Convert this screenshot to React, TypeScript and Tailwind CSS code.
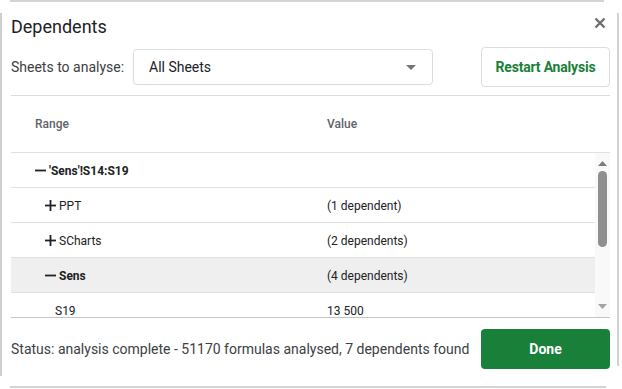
import React from "react";

type Row = {
  label: string;
  value?: string;
  sign?: "minus" | "plus";
  indent: number;
  bold?: boolean;
  active?: boolean;
};

const rows: Row[] = [
  { label: "'Sens'!S14:S19", sign: "minus", indent: 24, bold: true },
  { label: "PPT", value: "(1 dependent)", sign: "plus", indent: 34 },
  { label: "SCharts", value: "(2 dependents)", sign: "plus", indent: 34 },
  { label: "Sens", value: "(4 dependents)", sign: "minus", indent: 34, bold: true, active: true },
  { label: "S19", value: "13 500", indent: 44 },
];

function Sign({ kind }: { kind: "minus" | "plus" }) {
  return (
    <svg width="11" height="11" viewBox="0 0 11 11" className="shrink-0 mr-[2px]">
      <rect x="0" y="4.6" width="11" height="1.8" fill="#202124" />
      {kind === "plus" && <rect x="4.6" y="0" width="1.8" height="11" fill="#202124" />}
    </svg>
  );
}

function TableRow({ row }: { row: Row }) {
  return (
    <div
      className={`flex items-center h-[35px] pt-[1px] shrink-0 border-b border-[#e0e0e0] text-[12px] text-[#202124] ${
        row.active ? "bg-[#efefef]" : ""
      }`}
    >
      <div
        className={`w-[316px] flex items-center gap-[1px] ${row.bold ? "font-bold" : ""}`}
        style={{ paddingLeft: row.indent }}
      >
        {row.sign && <Sign kind={row.sign} />}
        <span>{row.label}</span>
      </div>
      <div className="flex-1">{row.value}</div>
    </div>
  );
}

function Scrollbar() {
  return (
    <div className="w-[15px] shrink-0 bg-[#f9f9f9] flex flex-col items-center">
      <svg width="9" height="5" viewBox="0 0 9 5" className="mt-[8px]">
        <path d="M0 5 L4.5 0 L9 5 Z" fill="#7d7d7d" />
      </svg>
      <div className="mt-[5px] w-[9px] h-[76px] rounded-full bg-[#8f8f8f]" />
      <div className="flex-1" />
      <svg width="9" height="5" viewBox="0 0 9 5" className="mb-[8px]">
        <path d="M0 0 L9 0 L4.5 5 Z" fill="#a3a3a3" />
      </svg>
    </div>
  );
}

export default function App() {
  return (
    <div className="w-[622px] h-[389px] bg-white flex flex-col overflow-hidden font-['Roboto','Liberation_Sans',sans-serif]">
      <div className="h-[2px] ml-[10px] w-[594px] bg-[#d4d4d4] shrink-0" />
      <div className="flex flex-1">
        <div className="w-[2px] bg-[#cfcfcf] mt-[11px] mb-[10px]" />
        <div className="w-[615px] pl-[9px] pr-[7px] flex flex-col">
          <div className="flex items-start justify-between mt-[13px]">
            <h1 className="text-[18px] leading-[24px] text-[#202124]">Dependents</h1>
            <svg width="12" height="12" viewBox="0 0 12 12" className="mt-[2px] mr-[4px]">
              <path d="M1.5 1.5 L10.5 10.5 M10.5 1.5 L1.5 10.5" stroke="#6f6f6f" strokeWidth="2.4" />
            </svg>
          </div>

          <div className="flex items-center mt-[8px] h-[40px]">
            <span className="w-[122px] shrink-0 text-[14px] text-[#3c4043]">Sheets to analyse:</span>
            <div className="w-[300px] h-[36px] border border-[#dadce0] rounded-[4px] flex items-center pl-[15px] pr-[16px]">
              <span className="flex-1 text-[14px] text-[#202124]">All Sheets</span>
              <svg width="10" height="5" viewBox="0 0 10 5">
                <path d="M0 0 L10 0 L5 5 Z" fill="#757575" />
              </svg>
            </div>
            <button className="ml-auto w-[129px] h-[40px] border border-[#dadce0] rounded-[4px] text-[14px] font-bold tracking-[-0.2px] text-[#188038]">
              Restart Analysis
            </button>
          </div>

          <div className="h-px bg-[#dadce0] mt-[8px]" />

          <div className="flex items-center h-[57px] border-b border-[#e0e0e0] text-[12px] font-medium text-[#5f6368]">
            <div className="w-[316px] pl-[24px]">Range</div>
            <div>Value</div>
          </div>

          <div className="flex h-[165px] border-b border-[#c4c4c4]">
            <div className="flex-1 flex flex-col overflow-hidden">
              {rows.map((r) => (
                <TableRow key={r.label} row={r} />
              ))}
            </div>
            <Scrollbar />
          </div>

          <div className="flex items-center mt-[11px]">
            <span className="text-[14px] text-[#3c4043]">
              Status: analysis complete - 51170 formulas analysed, 7 dependents found
            </span>
            <button className="ml-auto w-[129px] h-[40px] rounded-[4px] bg-[#188038] text-white text-[14px] font-bold">
              Done
            </button>
          </div>
        </div>
        <div className="w-[2px] bg-[#d2d2d2] mt-[11px] mb-[20px]" />
      </div>
      <div className="h-[2px] ml-[10px] w-[596px] bg-[#d4d4d4] shrink-0 mb-[1px]" />
    </div>
  );
}
